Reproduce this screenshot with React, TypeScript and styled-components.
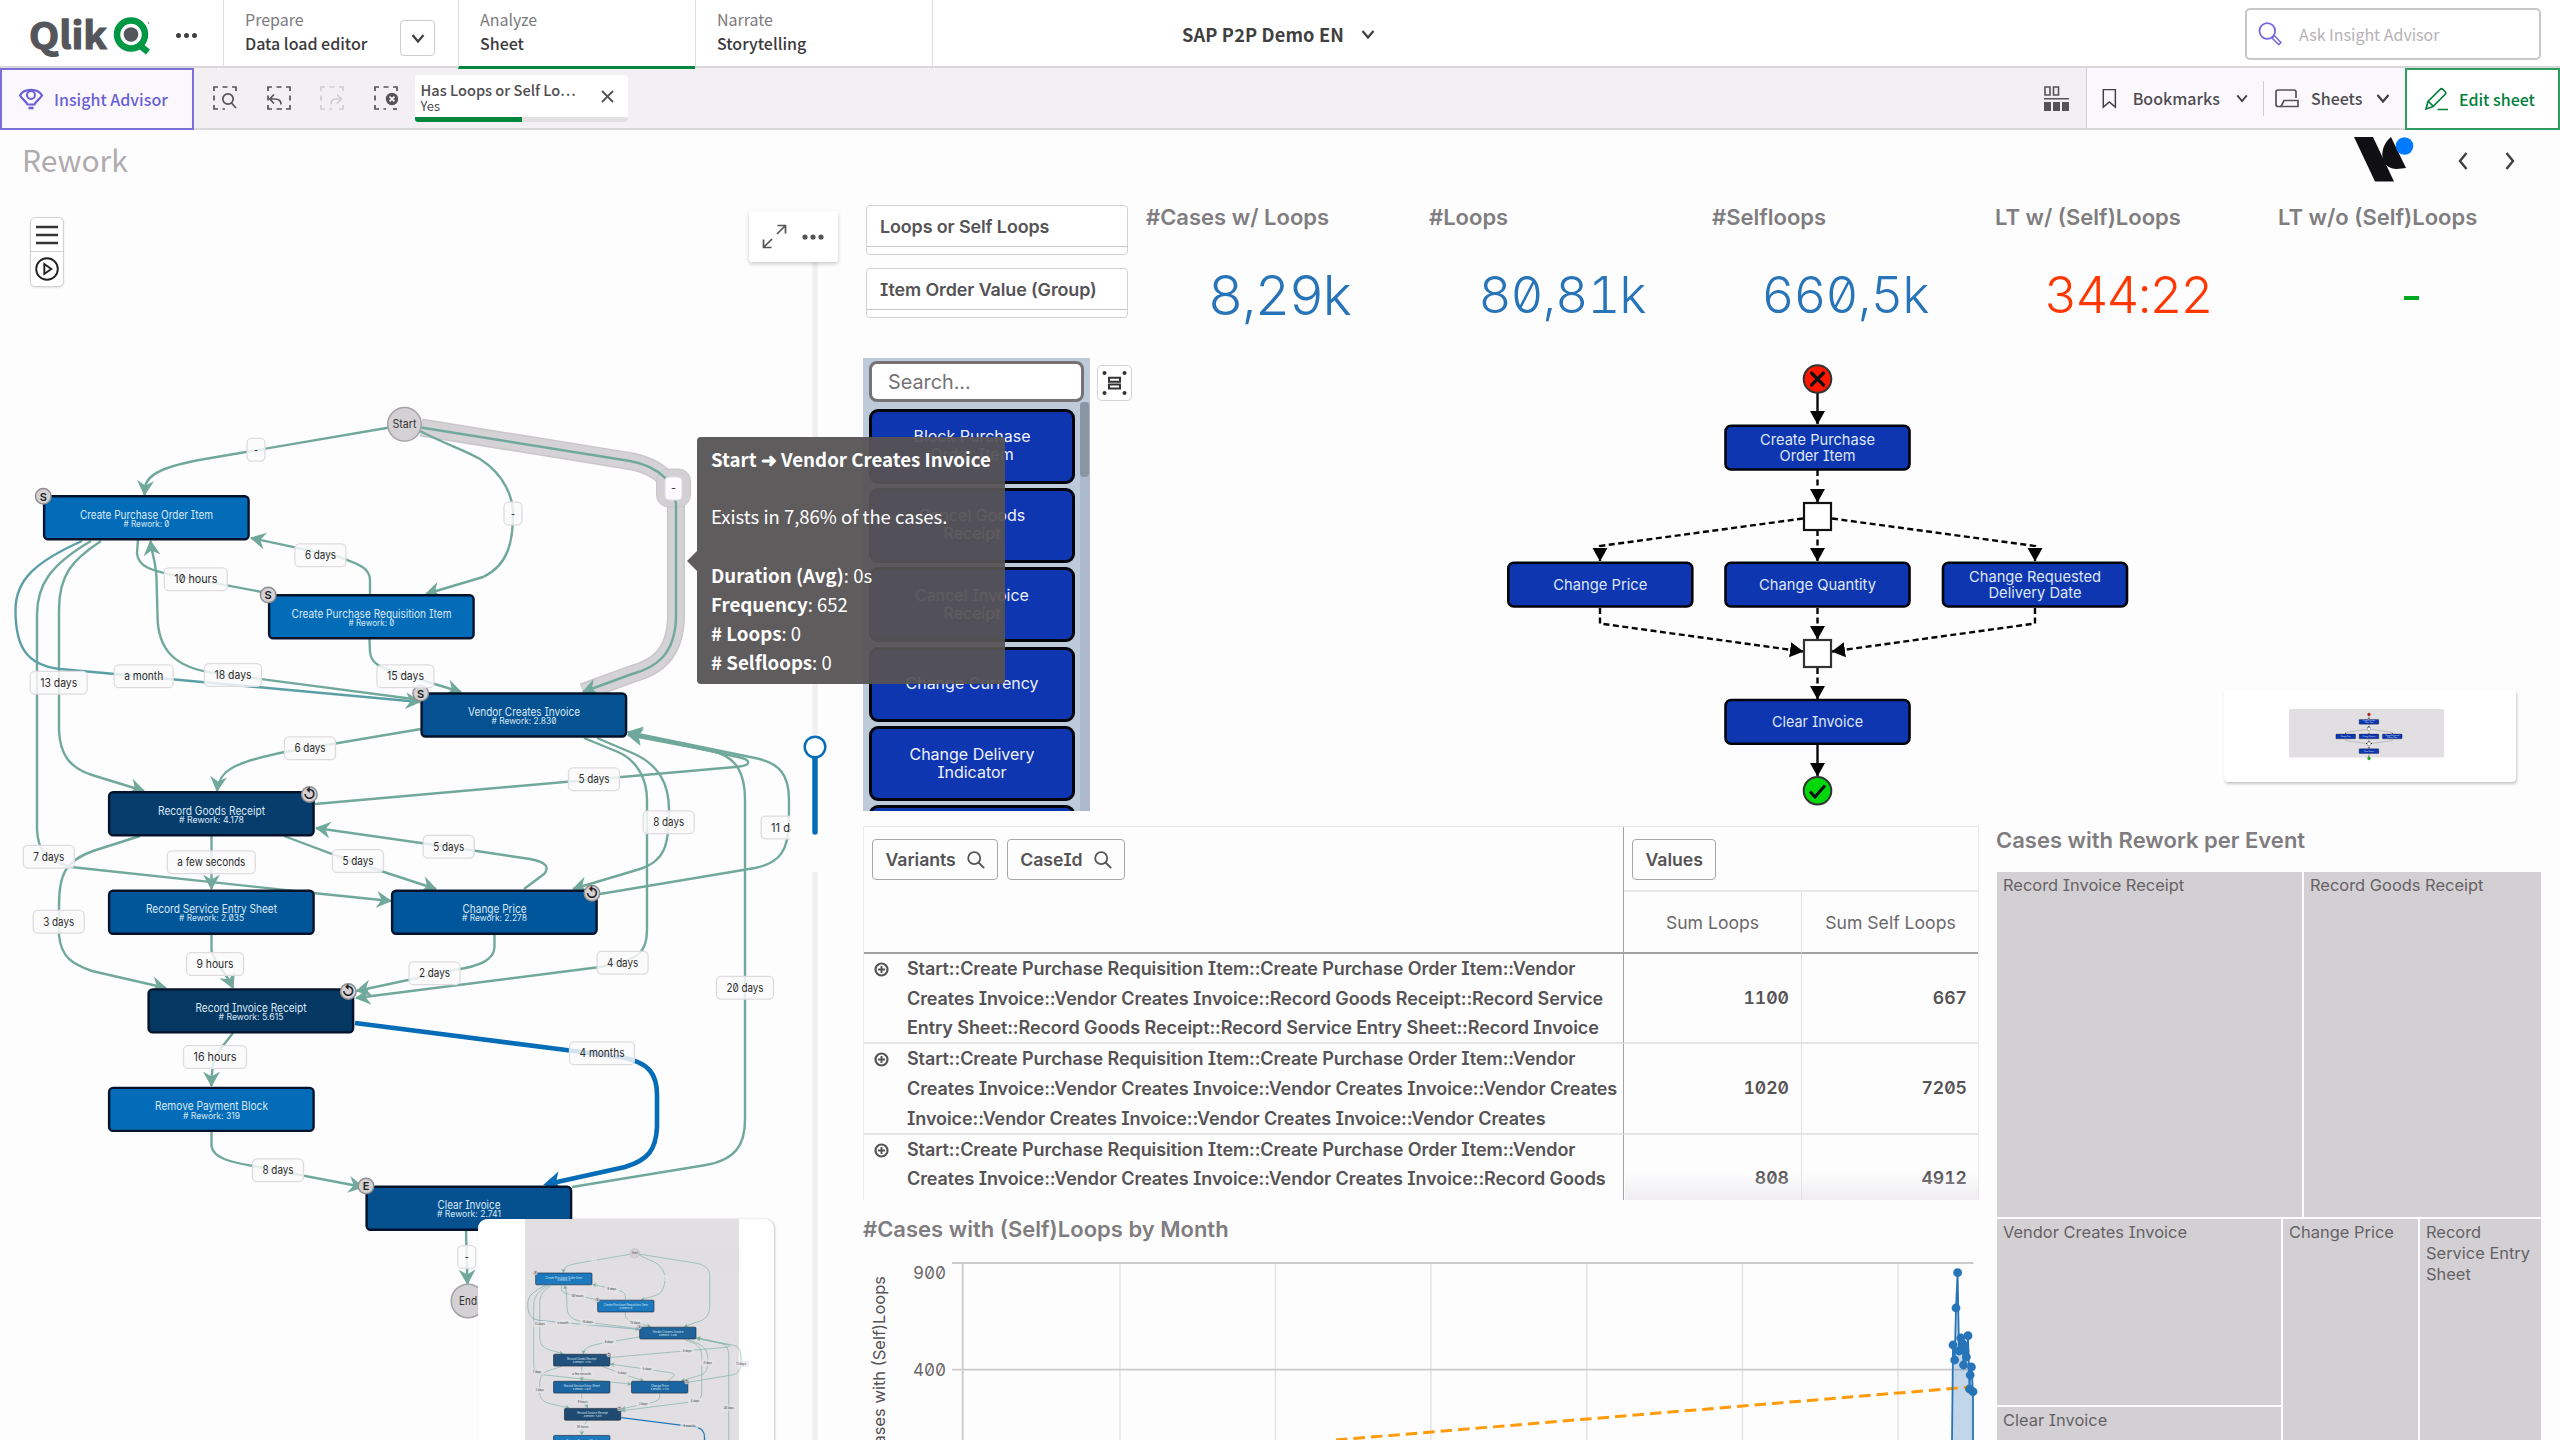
import React from "react";
import styled, { createGlobalStyle } from "styled-components";

const ui = `"Noto Sans CJK SC", "Noto Sans", sans-serif`;
const plex = `Inter, "Noto Sans", sans-serif`;

const GlobalStyle = createGlobalStyle`
  * { box-sizing: border-box; }
  body { margin: 0; background: #fefdfe; overflow: hidden; }
`;

const Page = styled.div`
  position: relative;
  width: 2560px;
  height: 1440px;
  overflow: hidden;
  display: flex;
  flex-direction: column;
  background: #fefdfe;
  color: #404040;
  font-family: ${plex};
  font-feature-settings: "zero", "cv08";
`;

/* ---------- header ---------- */

const Header = styled.header`
  flex: none;
  height: 68px;
  display: grid;
  grid-template-columns: 223px 235px 237px 238px 1fr 315px;
  background: #fff;
  border-bottom: 2px solid #d9d7da;
  font-family: ${ui};
`;

const Brand = styled.div`
  display: flex;
  align-items: center;
`;

const NavTab = styled.div<{ $active?: boolean; $last?: boolean }>`
  display: flex;
  align-items: center;
  justify-content: space-between;
  padding: 0 23px 0 21px;
  height: ${(p) => (p.$active ? 69 : 66)}px;
  border-left: 1px solid #dedcdf;
  border-right: ${(p) => (p.$last ? "1px solid #dedcdf" : "none")};
  border-bottom: ${(p) => (p.$active ? "3px solid #00873d" : "none")};
  z-index: 1;
`;

const TabText = styled.div`
  display: flex;
  flex-direction: column;
  font-size: 16px;
  line-height: 24px;
  padding-bottom: 4px;
  span { color: #7d7a7e; }
  strong { color: #3b393c; font-weight: 500; }
`;

const DropButton = styled.div`
  width: 35px;
  height: 36px;
  margin-top: 9px;
  border: 1.5px solid #cfcdd0;
  border-radius: 4px;
  display: flex;
  align-items: center;
  justify-content: center;
`;

const AppTitle = styled.div`
  display: flex;
  align-items: center;
  gap: 17px;
  padding: 0 0 2px 249px;
  font-size: 18.2px;
  font-weight: 700;
  letter-spacing: 0.15px;
  color: #404040;
`;

const SearchBox = styled.div`
  width: 296px;
  height: 52px;
  margin-top: 8px;
  border: 2px solid #c9c7ca;
  border-radius: 5px;
  display: flex;
  align-items: center;
  gap: 17px;
  padding-left: 11px;
  font-size: 16px;
  color: #b5b2b6;
`;

/* ---------- toolbar ---------- */

const Toolbar = styled.div`
  flex: none;
  height: 62px;
  display: flex;
  align-items: stretch;
  background: #f2f0f3;
  border-bottom: 2px solid #d9d7da;
  font-family: ${ui};
  font-size: 16px;
  font-weight: 500;
  color: #4f4c50;
`;

const InsightButton = styled.div`
  width: 194px;
  height: 62px;
  border: 2px solid #7a70d8;
  background: #faf8fd;
  color: #6a5fd6;
  display: flex;
  align-items: center;
  gap: 10px;
  padding: 0 0 1px 16px;
`;

const SelectionTools = styled.div`
  display: flex;
  align-items: center;
  gap: 29.5px;
  padding: 0 17px 0 19px;
`;

const Chip = styled.div`
  width: 213px;
  height: 47px;
  margin-top: 7px;
  border-radius: 4px 4px 3px 3px;
  overflow: hidden;
  background: #fff;
  display: flex;
  flex-direction: column;
`;

const ChipBody = styled.div`
  flex: 1;
  display: flex;
  justify-content: space-between;
  align-items: center;
  padding: 0 14px 0 6px;
`;

const ChipText = styled.div`
  display: flex;
  flex-direction: column;
  font-size: 14.6px;
  line-height: 17px;
  padding-top: 2px;
  small { font-size: 13px; line-height: 15px; font-weight: 400; }
`;

const ChipBar = styled.div`
  height: 5px;
  background: linear-gradient(to right, #00873d 0 107px, #e2e0e3 107px);
`;

const Spacer = styled.div`
  flex: 1;
`;

const LayoutToggle = styled.div`
  width: 42px;
  display: flex;
  align-items: center;
`;

const ToolGroup = styled.div`
  width: 319px;
  background: #faf8fc;
  border-left: 1.5px solid #d3d1d4;
  display: flex;
  align-items: center;
`;

const ToolItem = styled.div<{ $w: number; $gap: number }>`
  width: ${(p) => p.$w}px;
  height: 35px;
  display: flex;
  align-items: center;
  gap: ${(p) => p.$gap}px;
  & + & { border-left: 1.5px solid #cfcdd0; padding-left: 11px; }
  &:first-child { padding-left: 15px; }
  svg:last-child { margin-left: auto; margin-right: 15px; }
`;

const EditButton = styled.div`
  width: 155px;
  height: 62px;
  border: 2px solid #2f9c60;
  background: #fff;
  color: #00803a;
  display: flex;
  align-items: center;
  gap: 11px;
  padding: 0 0 1px 17px;
`;

/* ---------- sheet ---------- */

const SheetBar = styled.div`
  flex: none;
  height: 60px;
  display: flex;
  align-items: center;
  padding: 0 45px 0 22px;
  h1 {
    flex: 1;
    margin: 0;
    font: 400 30px/58px ${ui};
    height: 60px;
    color: #aeabae;
  }
`;

const PagerIcons = styled.div`
  display: flex;
  align-items: center;
  gap: 37px;
  margin: 2px 0 0 44px;
`;

const Body = styled.main`
  flex: 1;
  min-height: 0;
  display: grid;
  grid-template-columns: 863px 1682px;
`;

const FlowPanel = styled.section`
  position: relative;
  height: 1250px;
  overflow: hidden;
  > svg { display: block; }
`;

const SideMenu = styled.div`
  position: absolute;
  left: 30px;
  top: 27px;
  width: 34px;
  height: 70px;
  border: 1.5px solid #d3d1d4;
  border-radius: 5px;
  background: #fff;
  display: grid;
  grid-template-rows: 1fr 1fr;
  place-items: center;
  box-shadow: 0 1px 2px rgba(0, 0, 0, 0.1);
`;

const MenuCell = styled.div<{ $line?: boolean }>`
  width: 100%;
  height: 100%;
  display: flex;
  align-items: center;
  justify-content: center;
  border-bottom: ${(p) => (p.$line ? "1.5px solid #d3d1d4" : "none")};
`;

const HoverMenu = styled.div`
  position: absolute;
  left: 749px;
  top: 21px;
  width: 89px;
  height: 51px;
  border-radius: 3px;
  background: #fff;
  box-shadow: 0 2px 4px rgba(0, 0, 0, 0.2);
  display: flex;
  align-items: center;
  gap: 14px;
  padding-left: 13px;
`;

const FlowMini = styled.div`
  position: absolute;
  left: 478px;
  top: 1029px;
  width: 296px;
  height: 240px;
  border-radius: 9px;
  background: #fff;
  box-shadow: 1px 0 2px rgba(0, 0, 0, 0.22);
  overflow: hidden;
`;

const Tooltip = styled.div`
  position: absolute;
  left: 697px;
  top: 437px;
  width: 308px;
  height: 247px;
  padding: 7px 0 0 14px;
  border-radius: 4px;
  background: rgba(86, 83, 85, 0.95);
  color: #fff;
  font: 400 18.5px/29px ${ui};
  white-space: nowrap;
  &::before {
    content: "";
    position: absolute;
    left: -10px;
    top: 114px;
    border-style: solid;
    border-width: 10px 10px 10px 0;
    border-color: transparent rgba(86, 83, 85, 0.95) transparent transparent;
  }
`;

const TipLine = styled.div`
  height: 29px;
  b { font-size: 18.7px; }
`;

const Dash = styled.section`
  display: flex;
  flex-direction: column;
  min-width: 0;
`;

const TopRow = styled.div`
  height: 168px;
  display: flex;
  padding-left: 3px;
`;

const Filters = styled.div`
  width: 280px;
  padding-top: 15px;
  display: flex;
  flex-direction: column;
  gap: 12.5px;
`;

const FilterBox = styled.div`
  width: 262px;
  height: 50px;
  border: 1.5px solid #d3d1d4;
  border-radius: 4px;
  background: #fff;
  div {
    height: 41px;
    padding-left: 13px;
    border-bottom: 1.5px solid #c7c5c8;
    font-size: 17.9px;
    line-height: 41px;
    font-weight: 600;
    letter-spacing: -0.1px;
    color: #555355;
  }
`;

const Kpis = styled.div`
  display: grid;
  grid-template-columns: repeat(5, 266px);
  column-gap: 17px;
`;

const Kpi = styled.div`
  display: flex;
  flex-direction: column;
  padding-top: 12px;
`;

const Heading = styled.h2`
  margin: 0;
  font-size: 22px;
  line-height: 30px;
  font-weight: 600;
  color: #807d80;
  white-space: nowrap;
`;

const KpiValue = styled.div<{ $color: string; $size: number; $ls: number }>`
  height: 125px;
  display: flex;
  align-items: center;
  justify-content: center;
  color: ${(p) => p.$color};
  font-size: ${(p) => p.$size}px;
  letter-spacing: ${(p) => p.$ls}px;
  font-weight: 350;
  font-variant-numeric: tabular-nums slashed-zero;
  white-space: nowrap;
`;

const KpiDash = styled.span`
  width: 15px;
  height: 4px;
  margin-top: 6px;
  background: #00ab22;
`;

const MidRow = styled.div`
  height: 453px;
  display: flex;
`;

const Palette = styled.div`
  width: 227px;
  height: 453px;
  background: #bccada;
  padding: 3px 0 0 6px;
  display: flex;
  flex-direction: column;
  overflow: hidden;
`;

const PaletteSearch = styled.div`
  flex: none;
  width: 215px;
  height: 41px;
  border: 3px solid #777274;
  border-radius: 8px;
  background: #fff;
  padding-left: 16px;
  font-size: 19.8px;
  line-height: 37px;
  color: #747174;
`;

const PaletteScroll = styled.div`
  display: grid;
  grid-template-columns: 206px 10px;
  column-gap: 5px;
`;

const PaletteList = styled.div`
  padding-top: 6.5px;
  display: flex;
  flex-direction: column;
  gap: 4.4px;
`;

const PaletteItem = styled.div`
  flex: none;
  height: 75px;
  border: 3.5px solid #02040c;
  border-radius: 9px;
  background: #0e36b1;
  color: #eef1fb;
  font-size: 16px;
  line-height: 18px;
  text-align: center;
  display: flex;
  align-items: center;
  justify-content: center;
  padding: 0 20px 2px;
`;

const ScrollTrack = styled.div`
  background: #adb9cc;
  height: 410px;
`;

const ScrollThumb = styled.div`
  width: 9px;
  height: 75px;
  border-radius: 4px;
  background: #8a95a4;
`;

const FitButton = styled.div`
  width: 35px;
  height: 36px;
  margin: 7px 0 0 7px;
  border: 1.5px solid #d3d1d4;
  border-radius: 5px;
  background: #fff;
  display: flex;
  align-items: center;
  justify-content: center;
`;

const BpmnArea = styled.div`
  flex: none;
  width: 1413px;
  height: 453px;
  position: relative;
  > svg { display: block; }
`;

const BpmnMini = styled.div`
  position: absolute;
  right: 29px;
  bottom: 29px;
  width: 292px;
  height: 92px;
  border-radius: 4px;
  background: #fff;
  box-shadow: 1px 2px 3px rgba(0, 0, 0, 0.22);
  overflow: hidden;
`;

const BottomRow = styled.div`
  display: grid;
  grid-template-columns: 1117px 545px;
  column-gap: 16px;
  padding-top: 15px;
  height: 629px;
`;

/* ---------- pivot table ---------- */

const Pivot = styled.div`
  width: 1116px;
  height: 374px;
  overflow: hidden;
  position: relative;
  display: grid;
  grid-template-columns: 760px 178px 178px;
  grid-template-rows: 65px 62px 90.3px 90.3px 90.3px;
  border-top: 1.5px solid #e9e7ea;
  border-left: 1px solid #efedf0;
  border-right: 1px solid #e9e7ea;
`;

const DimHead = styled.div`
  grid-row: 1 / 3;
  border-right: 1.5px solid #a3a1a3;
  border-bottom: 2px solid #a3a1a3;
  display: flex;
  gap: 8.5px;
  padding: 12px 0 0 8px;
`;

const ValHead = styled.div`
  grid-column: 2 / 4;
  border-bottom: 2px solid #e9e7ea;
  padding: 12px 0 0 8px;
`;

const FieldTag = styled.div`
  display: inline-flex;
  align-items: center;
  gap: 11px;
  height: 41px;
  padding: 0 12.5px;
  border: 1.5px solid #a9a7aa;
  border-radius: 4px;
  font-size: 17.7px;
  font-weight: 600;
  letter-spacing: -0.05px;
  color: #555355;
`;

const ColHead = styled.div`
  display: flex;
  align-items: center;
  justify-content: center;
  border-right: 1px solid #e4e2e5;
  border-bottom: 2px solid #a3a1a3;
  font-size: 17.6px;
  color: #6a676a;
`;

const VariantCell = styled.div`
  display: grid;
  grid-template-columns: 43px 1fr;
  border-right: 1.5px solid #a3a1a3;
  border-bottom: 2px solid #e6e4e7;
  overflow: hidden;
  font-size: 18px;
  font-weight: 600;
  line-height: 29.7px;
  letter-spacing: -0.09px;
  color: #555355;
  white-space: pre;
  svg { margin: 8px 0 0 10px; }
`;

const NumCell = styled.div`
  display: flex;
  align-items: center;
  justify-content: flex-end;
  padding: 0 12px 2px 0;
  border-right: 1px solid #e4e2e5;
  border-bottom: 2px solid #e6e4e7;
  font-size: 17.6px;
  font-weight: 600;
  font-variant-numeric: tabular-nums slashed-zero;
  color: #555355;
`;

const PivotFade = styled.div`
  position: absolute;
  left: 761px;
  right: 0;
  bottom: 0;
  height: 28px;
  background: linear-gradient(rgba(225, 223, 226, 0), rgba(225, 223, 226, 0.55));
`;

const ChartTitle = styled.div`
  height: 58px;
  padding-top: 14px;
`;

/* ---------- treemap ---------- */

const TreeTitle = styled(Heading)`
  margin-top: -1px;
`;

const Treemap = styled.div`
  display: flex;
  flex-direction: column;
  gap: 2px;
  margin: 17px 0 0 1px;
  height: 700px;
`;

const TreeRow = styled.div<{ $cols: string; $h: number }>`
  display: grid;
  grid-template-columns: ${(p) => p.$cols};
  height: ${(p) => p.$h}px;
  gap: 2px;
`;

const TreeStack = styled.div`
  display: grid;
  grid-template-rows: 186px 1fr;
  gap: 2px;
`;

const Tile = styled.div`
  background: #d3d0d3;
  padding: 3px 6px;
  font-size: 16.45px;
  line-height: 21.4px;
  color: #656265;
`;

const Overflow = styled.div`
  overflow: hidden;
  height: 614px;
`;

/* ---------- icons ---------- */

const Chevron = ({ s = 14 }: { s?: number }) => (
  <svg width={s} height={s} viewBox="0 0 14 14">
    <path d="M1.5 4 L7 10.5 L12.5 4" fill="none" stroke="#404040" strokeWidth="2.2" />
  </svg>
);

const Magnifier = ({ s = 18, c = "#555355", w = 1.8 }: { s?: number; c?: string; w?: number }) => (
  <svg width={s} height={s} viewBox="0 0 18 18" fill="none" stroke={c} strokeWidth={w}>
    <circle cx="7.2" cy="7.2" r="6" />
    <path d="M11.5 11.5 L17.2 17.2" />
  </svg>
);

const AdvisorSearch = () => (
  <svg width="24" height="24" viewBox="0 0 24 24" fill="none" stroke="#7468e0" strokeWidth="1.8">
    <circle cx="9.3" cy="9" r="7.8" />
    <path d="M14 16 L16.5 13.8 L23 20.5 L20.8 22.8 Z" strokeWidth="1.5" />
  </svg>
);

const SelBox = ({ faded, children }: { faded?: boolean; children: React.ReactNode }) => (
  <svg width="24" height="24" viewBox="0 0 24 24" fill="none" stroke={faded ? "#cfcdd0" : "#555355"} strokeWidth="1.7">
    <path d="M1 5 V1 H5 M9.5 1 H14.5 M19 1 H23 V5 M1 9.5 V14.5 M1 19 V23 H5 M9.5 23 H12" />
    {children}
  </svg>
);

const QlikLogo = () => (
  <svg width="223" height="66" viewBox="0 0 223 66">
    <text x="29" y="46.5" fontFamily="Noto Sans CJK SC" fontWeight="700" fontSize="37" fill="#54565b" stroke="#54565b" strokeWidth="1.2" textLength="78" lengthAdjust="spacingAndGlyphs">Qlik</text>
    <circle cx="131" cy="32.5" r="14" fill="#fff" stroke="#009845" strokeWidth="6.5" />
    <path d="M138 42 L148 50" stroke="#009845" strokeWidth="6.5" />
    <circle cx="131" cy="32.5" r="7.3" fill="#54565b" />
    <circle cx="148.5" cy="21" r="0.9" fill="#999" />
    <circle cx="178.5" cy="33.5" r="2.5" fill="#404040" />
    <circle cx="186.5" cy="33.5" r="2.5" fill="#404040" />
    <circle cx="194.5" cy="33.5" r="2.5" fill="#404040" />
  </svg>
);

/* ---------- process flow graph ---------- */

type Box = { x: number; y: number; t: string; w: number; r: string; rw: number; c: string; badge?: [string, number, number] };

const boxes: Box[] = [
  { x: 43, y: 495, t: "Create Purchase Order Item", w: 133, r: "0", rw: 46, c: "#026cb8", badge: ["S", 43.3, 496.3] },
  { x: 268, y: 594, t: "Create Purchase Requisition Item", w: 160, r: "0", rw: 46, c: "#026cb8", badge: ["S", 268.2, 595] },
  { x: 420.5, y: 692.3, t: "Vendor Creates Invoice", w: 112, r: "2.830", rw: 65, c: "#055292", badge: ["S", 420.7, 693.3] },
  { x: 108, y: 791, t: "Record Goods Receipt", w: 107, r: "4.178", rw: 65, c: "#063d6d", badge: ["↺", 309.4, 794.5] },
  { x: 108, y: 889.5, t: "Record Service Entry Sheet", w: 131, r: "2.035", rw: 65, c: "#005698", badge: undefined },
  { x: 391, y: 889.5, t: "Change Price", w: 64, r: "2.278", rw: 65, c: "#00569a", badge: ["↺", 592, 893.3] },
  { x: 147.5, y: 988.2, t: "Record Invoice Receipt", w: 111, r: "5.615", rw: 65, c: "#053763", badge: ["↺", 348.3, 991.5] },
  { x: 108, y: 1086.7, t: "Remove Payment Block", w: 113, r: "319", rw: 57, c: "#026cb8", badge: undefined },
  { x: 365.5, y: 1185.5, t: "Clear Invoice", w: 63, r: "2.741", rw: 64, c: "#055190", badge: ["E", 366, 1186] },
];

const edges: string[] = [
  "M388,427.7 L205,459 C165,466 146,474 145,488 L144.5,495",
  "M420,431 C445,444 462,449 480,459 C505,475 513,498 513,514 C513,540 509,565 483,577 L426,594",
  "M370,594 L370,580 C370,565 350,562 340,557 L251,538",
  "M369.5,639 L370,652 C371,664 380,668 405,675 L461,692",
  "M421,700 L215,673 C175,668 157.5,650 157.5,615 L156.5,578 C156,562 152,555 150.5,541",
  "M101,541 C72,560 59,575 59,610 L59,730 C60,755 70,768 92,775 L144,791",
  "M91,541 C50,565 37,585 37,615 L37,830 C38,850 45,860 71,867 L313,893 L391,901",
  "M421,729 L285,752 C230,763 219,772 217,791",
  "M315,804 L735,767 C752,766 752,760 738,757 L628,733",
  "M572,1187 L706,1165 C735,1160 745,1145 745,1120 L745,800 C745,775 738,757 712,751 L628,735",
  "M600,894 L755,868 C780,863 789,850 789,820 L789,800 C789,775 780,763 755,758 L628,732",
  "M597,738 L630,752 C660,764 669,785 669,810 C669,845 665,861 640,869 L573,889",
  "M584,738 L618,752 C638,761 647,780 647,800 L647,930 C647,952 640,960 600,967 L356,998",
  "M211.5,836 L211.5,889",
  "M284,836 L335,855 L384,872 L436,889",
  "M524,889 L544,874 C550,867 546,862 530,859 L470,850 L316,828",
  "M140,836 L93,851 C65,861 59,875 59,905 L59,935 C61,957 72,964 92,971 L166,988",
  "M211.5,935 L211.5,950 C213,962 225,970 233,988",
  "M494.5,935 L494.5,947 C494,960 480,966 455,970 L356.5,991",
  "M233,1033 L222,1047 C214,1058 211.5,1064 211.5,1086",
  "M211.5,1131 L211.5,1146 C213,1158 230,1162 253,1166 L363,1187",
  "M466,1230 L467.5,1284",
];

const hotEdge = "M421,427.5 L630,461 C662,467 676,485 676,505 L676,615 C676,655 655,668 632,674 L583,692";

const labels: [string, number, number, number][] = [
  ["-", 256, 449.7, 4], ["-", 513, 513.5, 4], ["6 days", 320.4, 555.3, 31], ["10 hours", 195.8, 579.3, 43],
  ["15 days", 405.4, 676.3, 37], ["18 days", 233, 675, 37], ["a month", 143.7, 676.3, 39], ["13 days", 58.7, 682.7, 37],
  ["6 days", 310, 748.3, 31], ["5 days", 594, 779.3, 31], ["8 days", 668.7, 822.3, 31], ["11 days", 789.6, 827.5, 37],
  ["7 days", 48.8, 856.7, 31], ["a few seconds", 211.3, 862.3, 68], ["5 days", 358, 861, 31], ["5 days", 448.7, 846.7, 31],
  ["3 days", 58.7, 921.8, 31], ["9 hours", 215, 964, 37], ["2 days", 434.5, 973.3, 31], ["4 days", 622.6, 962.7, 31],
  ["20 days", 745, 987.7, 37], ["16 hours", 215, 1057, 43], ["4 months", 602, 1053.3, 45], ["8 days", 278, 1170.3, 31],
  ["-", 466.8, 1257, 4],
];

const teal = "#70a99b";

const FlowGraph = ({ mini }: { mini?: boolean }) => (
  <g fontFamily="Inter" textAnchor="middle" opacity={mini ? 0.88 : 1}>
    {!mini && (
      <g fill="none" stroke="#c9c6c9">
        <path d={hotEdge} strokeWidth="18" />
        <path d={hotEdge} strokeWidth="15" stroke="#d5d2d5" />
        <rect x="656.5" y="469" width="34" height="38" rx="12" fill="#d3d0d3" stroke="#c9c6c9" />
      </g>
    )}
    <g fill="none" stroke={teal} strokeWidth="2.4">
      <path d={hotEdge} markerEnd="url(#tealHead)" />
      <path d="M138,540 L137,553 C138,568 155,571 172,575 L262,592" />
      {edges.map((d) => <path key={d} d={d} markerEnd="url(#tealHead)" />)}
      <path d="M82,541 C35,562 15.5,580 15.5,610 C15.5,645 25,665 60,669 L115,674 L420,702" stroke="#5a9fa5" markerEnd="url(#tealHead)" />
      <path d="M355,1023 L570,1050.5 L620,1057 C650,1062 657,1075 657,1095 L657,1127 C656,1150 648,1160 625,1167 L548,1184" stroke="#056cb8" strokeWidth="4.6" markerEnd="url(#blueHead)" />
    </g>
    {[["Start", 404.5, 424.3], ["End", 468, 1301]].map(([t, x, y]) => (
      <g key={t as string}>
        <circle cx={x} cy={y} r="16.8" fill="#d3d1d4" stroke="#a5a3a5" strokeWidth="1.5" />
        <text x={x} y={(y as number) + 3.5} fontSize="11.2" fill="#333" textLength={t === "Start" ? 24 : 18} lengthAdjust="spacingAndGlyphs">{t}</text>
      </g>
    ))}
    {boxes.map((b) => (
      <g key={b.t}>
        <rect x={b.x + 1.1} y={b.y + 1.2} width="204.5" height="43" rx="4" fill={b.c} stroke="#04132b" strokeWidth="2.4" />
        <text x={b.x + 103.5} y={b.y + 23.5} fontSize="11.5" fill="#d9e8f6" textLength={b.w} lengthAdjust="spacingAndGlyphs">{b.t}</text>
        <text x={b.x + 103.5} y={b.y + 31.8} fontSize="8.6" fill="#d9e8f6" textLength={b.rw} lengthAdjust="spacingAndGlyphs">{"# Rework: " + b.r}</text>
      </g>
    ))}
    {boxes.map((b) => b.badge && (
      <g key={b.t}>
        <circle cx={b.badge[1]} cy={b.badge[2]} r="7.8" fill="#d3d1d4" stroke="#8e8c8e" strokeWidth="1.4" />
        <text x={b.badge[1]} y={b.badge[2] + 4.2} fontSize={b.badge[0] === "↺" ? 14 : 11} fontWeight="600" fill="#222">{b.badge[0]}</text>
      </g>
    ))}
    {labels.map(([t, x, y, w], i) => {
      const bw = t === "-" ? 18 : w + 20;
      return (
        <g key={i}>
          <rect x={x - bw / 2} y={y - 11.4} width={bw} height="22.8" rx="4.5" fill={mini ? "#e6e4e7" : "#fcfafc"} fillOpacity={mini ? 0.7 : 0.84} stroke={mini ? "none" : "#dedcde"} strokeWidth="1.3" />
          <text x={x} y={y + 4} fontSize="11.3" fill="#2c2c2c" textLength={w} lengthAdjust="spacingAndGlyphs">{t}</text>
        </g>
      );
    })}
    {!mini && (
      <g>
        <rect x="665" y="477" width="17" height="23" rx="4" fill="#fcfafc" stroke="#dedcde" />
        <text x="673.6" y="492" fontSize="11" fill="#333">-</text>
      </g>
    )}
  </g>
);

/* ---------- change process diagram ---------- */

const steps: [string[], number[], number, number][] = [
  [["Create Purchase", "Order Item"], [115, 76], 1724.5, 424.7],
  [["Change Price"], [94], 1507.3, 561.7],
  [["Change Quantity"], [117], 1724.5, 561.7],
  [["Change Requested", "Delivery Date"], [132, 93], 1942, 561.7],
  [["Clear Invoice"], [91], 1724.5, 699],
];

const Bpmn = () => (
  <g fontFamily="Inter" textAnchor="middle">
    <g fill="none" stroke="#050505" strokeWidth="2.4">
      <path d="M1817.5,393 V424" markerEnd="url(#solidHead)" />
      <path d="M1817.5,745 V776" markerEnd="url(#solidHead)" />
      <g strokeDasharray="6 3.5">
        <path d="M1817.5,470 V502" markerEnd="url(#solidHead)" />
        <path d="M1817.5,530 V561" markerEnd="url(#solidHead)" />
        <path d="M1817.5,608 V639" markerEnd="url(#solidHead)" />
        <path d="M1817.5,668 V699" markerEnd="url(#solidHead)" />
        <path d="M1803,518.5 L1600,546 V561" markerEnd="url(#solidHead)" />
        <path d="M1832,518.5 L2035,546 V561" markerEnd="url(#solidHead)" />
        <path d="M1600,608 V623.5 L1803,651.5" markerEnd="url(#solidHead)" />
        <path d="M2035,608 V623.5 L1832,651.5" markerEnd="url(#solidHead)" />
      </g>
    </g>
    <circle cx="1817.5" cy="379" r="13.8" fill="#ff1800" stroke="#333" strokeWidth="2" />
    <path d="M1811.5,373 L1823.5,385 M1823.5,373 L1811.5,385" stroke="#111" strokeWidth="3.2" strokeLinecap="round" />
    <circle cx="1817.5" cy="790.7" r="13.8" fill="#00d80b" stroke="#333" strokeWidth="2" />
    <path d="M1810,791.5 L1815,797 L1825,785.5" stroke="#111" strokeWidth="3" fill="none" />
    <rect x="1804" y="503" width="27" height="27" fill="#fff" stroke="#111" strokeWidth="2.2" />
    <rect x="1804" y="640" width="27" height="27" fill="#fff" stroke="#333" strokeWidth="2.2" />
    {steps.map(([ls, ws, x, y]) => (
      <g key={ls[0]}>
        <rect x={x + 1} y={y + 1} width="184" height="43.8" rx="5.5" fill="#0e36b1" stroke="#02040c" strokeWidth="2.6" />
        {ls.map((l, i) => (
          <text key={l} x={x + 93} y={y + 22.8 + 5.3 + (i - (ls.length - 1) / 2) * 16.2} fontSize="15" fill="#dfe6f8" textLength={ws[i]} lengthAdjust="spacingAndGlyphs">{l}</text>
        ))}
      </g>
    ))}
  </g>
);

/* ---------- data ---------- */

const kpis: [string, string, string, number, number][] = [
  ["#Cases w/ Loops", "8,29k", "#2774b8", 55, -1.6],
  ["#Loops", "80,81k", "#2774b8", 51, -0.9],
  ["#Selfloops", "660,5k", "#2774b8", 51, -0.9],
  ["LT w/ (Self)Loops", "344:22", "#ff3600", 51, -1.9],
  ["LT w/o (Self)Loops", "", "#00ab22", 51, 0],
];

const variants: [string, string, string][] = [
  ["Start::Create Purchase Requisition Item::Create Purchase Order Item::Vendor\nCreates Invoice::Vendor Creates Invoice::Record Goods Receipt::Record Service\nEntry Sheet::Record Goods Receipt::Record Service Entry Sheet::Record Invoice", "1100", "667"],
  ["Start::Create Purchase Requisition Item::Create Purchase Order Item::Vendor\nCreates Invoice::Vendor Creates Invoice::Vendor Creates Invoice::Vendor Creates\nInvoice::Vendor Creates Invoice::Vendor Creates Invoice::Vendor Creates", "1020", "7205"],
  ["Start::Create Purchase Requisition Item::Create Purchase Order Item::Vendor\nCreates Invoice::Vendor Creates Invoice::Vendor Creates Invoice::Record Goods", "808", "4912"],
];

const activities = ["Block Purchase Order Item", "Cancel Goods Receipt", "Cancel Invoice Receipt", "Change Currency", "Change Delivery Indicator", ""];

const points: [number, number][] = [
  [1953, 1345], [1954.7, 1360], [1956, 1308], [1957.6, 1272.7], [1959, 1351], [1960.8, 1338], [1963, 1344], [1963.5, 1365],
  [1965, 1351], [1966.4, 1357], [1968, 1335.7], [1969.5, 1389], [1970.2, 1375], [1971.5, 1367], [1973, 1391.7],
];

const line = points.map((p) => p.join(",")).join(" L");

const AxisText = styled.g`
  font-size: 17px;
  font-feature-settings: "zero", "tnum";
  fill: #6a676a;
  text-anchor: end;
`;

const LineChart = () => (
  <svg width="1117" height="182" viewBox="863 1258 1117 182" fontFamily="Inter">
    <g stroke="#e4e2e4" strokeWidth="1.5">
      {[1120, 1275.5, 1431, 1586.7, 1742.4, 1898].map((x) => <path key={x} d={`M${x},1263 V1440`} />)}
    </g>
    <path d="M962.7,1263 V1440 M952,1263 H1973.5 M952,1369.7 H1973.5" stroke="#cccacc" strokeWidth="1.8" />
    <AxisText>
      <text x="946" y="1279">900</text>
      <text x="946" y="1376">400</text>
    </AxisText>
    <text transform="translate(884.5 1276) rotate(-90)" textAnchor="end" fontSize="16.5" fill="#555355">#Cases with (Self)Loops</text>
    <path d={`M1952,1440 L${line} L1973,1440 Z`} fill="#2774b8" fillOpacity="0.28" />
    <path d="M1336,1440 L1970,1387" stroke="#ff9b0a" strokeWidth="3" strokeDasharray="11.5 6" />
    <path d={`M1952,1440 L${line} V1440`} fill="none" stroke="#2774b8" strokeWidth="1.8" />
    {points.map(([x, y], i) => <circle key={i} cx={x} cy={y} r="4.4" fill="#2774b8" />)}
  </svg>
);

export default function App() {
  return (
    <Page>
      <GlobalStyle />
      <Header>
        <Brand><QlikLogo /></Brand>
        <NavTab>
          <TabText><span>Prepare</span><strong>Data load editor</strong></TabText>
          <DropButton><Chevron /></DropButton>
        </NavTab>
        <NavTab $active><TabText><span>Analyze</span><strong>Sheet</strong></TabText></NavTab>
        <NavTab $last><TabText><span>Narrate</span><strong>Storytelling</strong></TabText></NavTab>
        <AppTitle>SAP P2P Demo EN <Chevron /></AppTitle>
        <SearchBox><AdvisorSearch />Ask Insight Advisor</SearchBox>
      </Header>

      <Toolbar>
        <InsightButton>
          <svg width="26" height="24" viewBox="0 0 26 24" fill="none" stroke="#6a5fd6" strokeWidth="2.2">
            <path d="M2 8.5 C6 1 20 1 24 8.5 C21 13 17.5 14.5 16.5 17.5 H9.5 C8.5 14.5 5 13 2 8.5 Z" />
            <circle cx="13" cy="8" r="4" strokeWidth="2" />
            <path d="M10.5 21 H15.5" strokeWidth="2.6" />
          </svg>
          Insight Advisor
        </InsightButton>
        <SelectionTools>
          <SelBox><circle cx="15" cy="13" r="5.2" /><path d="M18.5 17 L23 22" /></SelBox>
          <SelBox><path d="M23 9.5 V14.5 M23 19 V23 H19 M12 23 H15 M3 13 H8 C12 13 14 15 14 18.5 M7 8.5 L2.8 13 L7 17.5" /></SelBox>
          <SelBox faded><path d="M23 19 V23 H19 M21 13 H16 C13 13 11 15 11 18.5 M17 8.5 L21.5 13 L17 17.5" /></SelBox>
          <SelBox><circle cx="18" cy="13" r="6.2" fill="#555355" stroke="none" /><path d="M15.6 10.6 L20.4 15.4 M20.4 10.6 L15.6 15.4" stroke="#fff" /><path d="M19 23 H23" /></SelBox>
        </SelectionTools>
        <Chip>
          <ChipBody>
            <ChipText><span>Has Loops or Self Lo…</span><small>Yes</small></ChipText>
            <svg width="13" height="13" viewBox="0 0 13 13"><path d="M1 1 L12 12 M12 1 L1 12" stroke="#555355" strokeWidth="1.8" /></svg>
          </ChipBody>
          <ChipBar />
        </Chip>
        <Spacer />
        <LayoutToggle>
          <svg width="25" height="25" viewBox="0 0 25 25" fill="#555355">
            <path d="M1 1 H6 V9 H1 Z M9.5 1 H14.5 V9 H9.5 Z" fill="none" stroke="#555355" strokeWidth="1.6" />
            <path d="M0 12 H25 V13.6 H0 Z M0 16 H7 V25 H0 Z M9 16 H16 V25 H9 Z M18 16 H25 V25 H18 Z" />
          </svg>
        </LayoutToggle>
        <ToolGroup>
          <ToolItem $w={176} $gap={16}>
            <svg width="17" height="23" viewBox="0 0 17 23"><path d="M1.5 1.2 H15.5 V21.5 L8.5 15.5 L1.5 21.5 Z" fill="none" stroke="#404040" strokeWidth="1.7" /></svg>
            Bookmarks <Chevron />
          </ToolItem>
          <ToolItem $w={142} $gap={12}>
            <svg width="24" height="19" viewBox="0 0 24 19" fill="none" stroke="#555355" strokeWidth="1.7">
              <path d="M6 17.5 H3 Q1 17.5 1 15.5 V3 Q1 1 3 1 H19 Q21 1 21 3 V9" />
              <path d="M9 11.5 H23 V17.5 H6 Z" />
            </svg>
            Sheets <Chevron />
          </ToolItem>
        </ToolGroup>
        <EditButton>
          <svg width="24" height="24" viewBox="0 0 24 24" fill="none" stroke="#00803a" strokeWidth="1.7">
            <path d="M2 22 L4 14.5 L16 2.5 Q17.5 1 19 2.5 L21 4.5 Q22.5 6 21 7.5 L9 19.5 Z M4.5 14.5 L9 19 M13.5 22.5 H24" />
          </svg>
          Edit sheet
        </EditButton>
      </Toolbar>

      <SheetBar>
        <h1>Rework</h1>
        <svg width="60" height="46" viewBox="2354 137 60 46">
          <path d="M2354,137 H2373 L2394,181.5 H2375 Z" fill="#101014" />
          <path d="M2391,137 C2379,147 2380,164 2391,168 C2397,170 2402,168 2406,168 Z" fill="#101014" />
          <circle cx="2404.5" cy="146" r="8.8" fill="#007bff" />
        </svg>
        <PagerIcons>
          <svg width="10" height="18" viewBox="0 0 10 18"><path d="M8.5 1 L2 9 L8.5 17" fill="none" stroke="#404040" strokeWidth="2.4" /></svg>
          <svg width="10" height="18" viewBox="0 0 10 18"><path d="M1.5 1 L8 9 L1.5 17" fill="none" stroke="#404040" strokeWidth="2.4" /></svg>
        </PagerIcons>
      </SheetBar>

      <Body>
        <FlowPanel>
          <svg width="863" height="1250" viewBox="0 190 863 1250">
            <defs>
              <marker id="tealHead" markerUnits="userSpaceOnUse" markerWidth="18" markerHeight="18" refX="14.5" refY="8.5" orient="auto">
                <path d="M0,0 L15.5,8.5 L0,17 L5,8.5 Z" fill={teal} />
              </marker>
              <marker id="blueHead" markerUnits="userSpaceOnUse" markerWidth="20" markerHeight="20" refX="13" refY="10" orient="auto">
                <path d="M0,0 L18,10 L0,20 L5,10 Z" fill="#056cb8" />
              </marker>
              <marker id="solidHead" markerUnits="userSpaceOnUse" markerWidth="14" markerHeight="16" refX="13" refY="7.5" orient="auto">
                <path d="M0,0 L13.5,7.5 L0,15 Z" fill="#050505" />
              </marker>
              <clipPath id="flowClip"><rect x="0" y="190" width="790.5" height="1250" /></clipPath>
            </defs>
            <g clipPath="url(#flowClip)"><FlowGraph /></g>
            <path d="M815,262 V735 M815,872 V1440" stroke="#f1eff1" strokeWidth="5.5" />
            <path d="M815,758 V832" stroke="#056cb8" strokeWidth="5.5" strokeLinecap="round" />
            <circle cx="815" cy="747" r="10.3" fill="#fff" stroke="#056cb8" strokeWidth="2.4" />
          </svg>
          <SideMenu>
            <MenuCell $line>
              <svg width="22" height="20" viewBox="0 0 22 20"><path d="M0 2 H22 M0 10 H22 M0 18 H22" stroke="#333" strokeWidth="2.4" /></svg>
            </MenuCell>
            <MenuCell>
              <svg width="24" height="24" viewBox="0 0 24 24" fill="none" stroke="#222" strokeWidth="1.9">
                <circle cx="12" cy="12" r="10.8" /><path d="M9.3 7 L16.3 12 L9.3 17 Z" />
              </svg>
            </MenuCell>
          </SideMenu>
          <HoverMenu>
            <svg width="25" height="25" viewBox="0 0 25 25" fill="none" stroke="#555355" strokeWidth="1.7">
              <path d="M15.5 1.5 H23.5 V9.5 M23 2 L15 10 M1.5 15.5 V23.5 H9.5 M2 23 L10 15" />
            </svg>
            <svg width="24" height="6" viewBox="0 0 24 6" fill="#555355"><circle cx="4" cy="3" r="2.6" /><circle cx="12" cy="3" r="2.6" /><circle cx="20" cy="3" r="2.6" /></svg>
          </HoverMenu>
          <FlowMini>
            <svg width="296" height="221" viewBox="478 1219 296 221">
              <rect x="525" y="1218" width="214" height="222" fill="#e1dfe2" />
              <g transform="translate(523.5 1136.8) scale(0.2755 0.2745)"><FlowGraph mini /></g>
            </svg>
          </FlowMini>
        </FlowPanel>

        <Dash>
          <TopRow>
            <Filters>
              <FilterBox><div>Loops or Self Loops</div></FilterBox>
              <FilterBox><div>Item Order Value (Group)</div></FilterBox>
            </Filters>
            <Kpis>
              {kpis.map(([t, v, c, s, ls]) => (
                <Kpi key={t}>
                  <Heading>{t}</Heading>
                  <KpiValue $color={c} $size={s} $ls={ls}>{v || <KpiDash />}</KpiValue>
                </Kpi>
              ))}
            </Kpis>
          </TopRow>

          <MidRow>
            <Palette>
              <PaletteSearch>Search...</PaletteSearch>
              <PaletteScroll>
                <PaletteList>
                  {activities.map((a) => <PaletteItem key={a}>{a}</PaletteItem>)}
                </PaletteList>
                <ScrollTrack><ScrollThumb /></ScrollTrack>
              </PaletteScroll>
            </Palette>
            <FitButton>
              <svg width="25" height="24" viewBox="0 0 25 24" fill="#333">
                <circle cx="2.5" cy="2" r="2" /><circle cx="22.5" cy="2" r="2" /><circle cx="2.5" cy="22" r="2" /><circle cx="22.5" cy="22" r="2" />
                <path d="M7 6.8 H18 V10.8 H7 Z M7 13.6 H18 V17.6 H7 Z" fill="none" stroke="#333" strokeWidth="2" />
              </svg>
            </FitButton>
            <BpmnArea>
              <svg width="1413" height="453" viewBox="1132 358 1413 453"><Bpmn /></svg>
              <BpmnMini>
                <svg width="292" height="92" viewBox="2224 690 292 92">
                  <rect x="2289" y="709" width="155" height="48.5" rx="1.5" fill="#e1dfe2" />
                  <g transform="translate(2174.5 673.9) scale(0.107)"><Bpmn /></g>
                </svg>
              </BpmnMini>
            </BpmnArea>
          </MidRow>

          <BottomRow>
            <Overflow>
              <Pivot>
                <DimHead>
                  <FieldTag>Variants <Magnifier /></FieldTag>
                  <FieldTag>CaseId <Magnifier /></FieldTag>
                </DimHead>
                <ValHead><FieldTag>Values</FieldTag></ValHead>
                <ColHead>Sum Loops</ColHead>
                <ColHead>Sum Self Loops</ColHead>
                {variants.map(([t, a, b]) => (
                  <React.Fragment key={a}>
                    <VariantCell>
                      <svg width="15" height="15" viewBox="0 0 15 15" fill="none" stroke="#555355" strokeWidth="2.2">
                        <circle cx="7.5" cy="7.5" r="6" /><path d="M7.5 4 V11 M4 7.5 H11" strokeWidth="1.9" />
                      </svg>
                      {t}
                    </VariantCell>
                    <NumCell>{a}</NumCell>
                    <NumCell>{b}</NumCell>
                  </React.Fragment>
                ))}
                <PivotFade />
              </Pivot>
              <ChartTitle><Heading>#Cases with (Self)Loops by Month</Heading></ChartTitle>
              <LineChart />
            </Overflow>
            <Overflow>
              <TreeTitle>Cases with Rework per Event</TreeTitle>
              <Treemap>
                <TreeRow $cols="305px 1fr" $h={344.5}>
                  <Tile>Record Invoice Receipt</Tile>
                  <Tile>Record Goods Receipt</Tile>
                </TreeRow>
                <TreeRow $cols="284px 135px 1fr" $h={340}>
                  <TreeStack>
                    <Tile>Vendor Creates Invoice</Tile>
                    <Tile>Clear Invoice</Tile>
                  </TreeStack>
                  <Tile>Change Price</Tile>
                  <Tile>Record Service Entry Sheet</Tile>
                </TreeRow>
              </Treemap>
            </Overflow>
          </BottomRow>
        </Dash>
      </Body>

      <Tooltip>
        <TipLine><b>Start ➜ Vendor Creates Invoice</b></TipLine>
        <TipLine />
        <TipLine>Exists in 7,86% of the cases.</TipLine>
        <TipLine />
        <TipLine><b>Duration (Avg)</b>: 0s</TipLine>
        <TipLine><b>Frequency</b>: 652</TipLine>
        <TipLine><b># Loops</b>: 0</TipLine>
        <TipLine><b># Selfloops</b>: 0</TipLine>
      </Tooltip>
    </Page>
  );
}
